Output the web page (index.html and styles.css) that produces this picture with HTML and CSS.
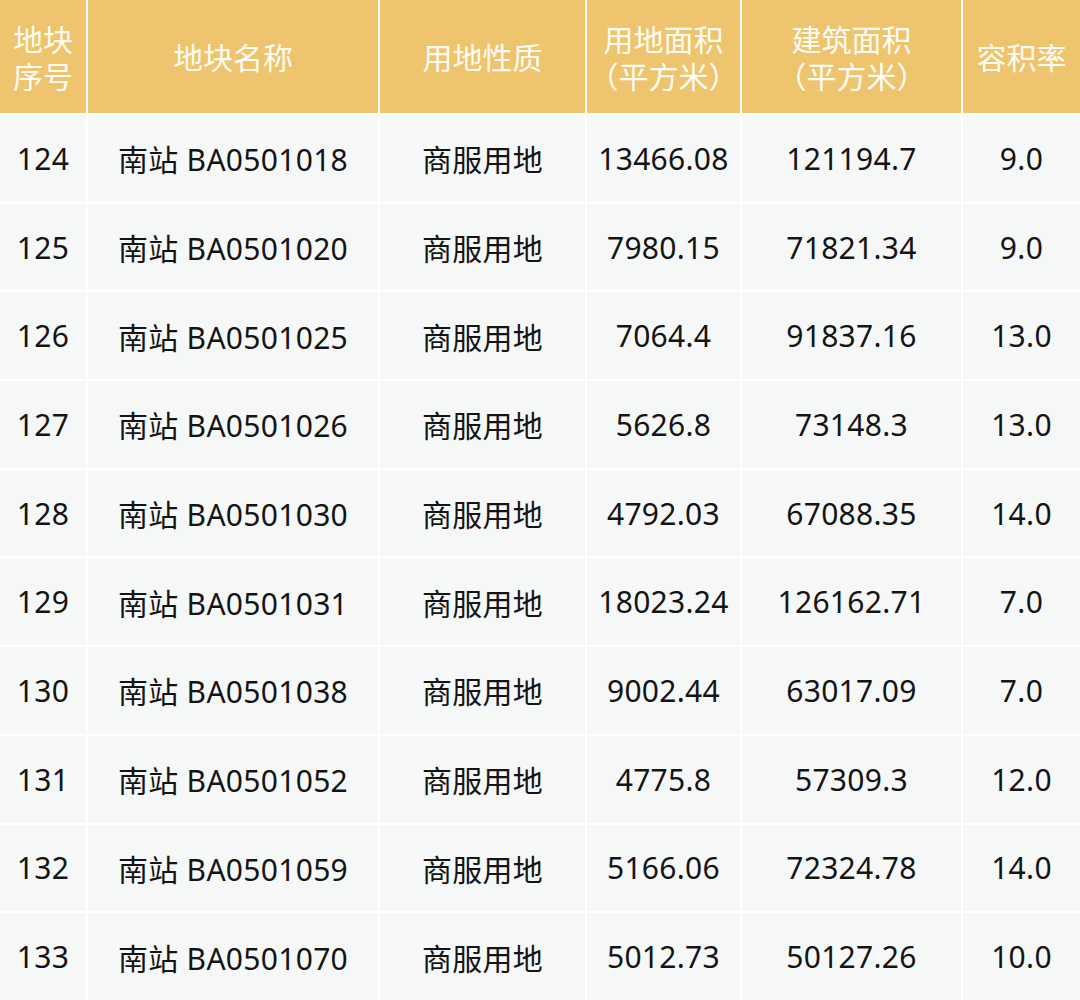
FILE: index.html
```html
<!DOCTYPE html>
<html lang="zh">
<head>
<meta charset="utf-8">
<link rel="stylesheet" href="styles.css">
</head>
<body>
<div class="table">
  <div class="th">地块<br>序号</div>
  <div class="th">地块名称</div>
  <div class="th">用地性质</div>
  <div class="th">用地面积<br>（平方米）</div>
  <div class="th">建筑面积<br>（平方米）</div>
  <div class="th">容积率</div>

  <div class="td">124</div><div class="td">南站 BA0501018</div><div class="td">商服用地</div><div class="td">13466.08</div><div class="td">121194.7</div><div class="td">9.0</div>
  <div class="td">125</div><div class="td">南站 BA0501020</div><div class="td">商服用地</div><div class="td">7980.15</div><div class="td">71821.34</div><div class="td">9.0</div>
  <div class="td">126</div><div class="td">南站 BA0501025</div><div class="td">商服用地</div><div class="td">7064.4</div><div class="td">91837.16</div><div class="td">13.0</div>
  <div class="td">127</div><div class="td">南站 BA0501026</div><div class="td">商服用地</div><div class="td">5626.8</div><div class="td">73148.3</div><div class="td">13.0</div>
  <div class="td">128</div><div class="td">南站 BA0501030</div><div class="td">商服用地</div><div class="td">4792.03</div><div class="td">67088.35</div><div class="td">14.0</div>
  <div class="td">129</div><div class="td">南站 BA0501031</div><div class="td">商服用地</div><div class="td">18023.24</div><div class="td">126162.71</div><div class="td">7.0</div>
  <div class="td">130</div><div class="td">南站 BA0501038</div><div class="td">商服用地</div><div class="td">9002.44</div><div class="td">63017.09</div><div class="td">7.0</div>
  <div class="td">131</div><div class="td">南站 BA0501052</div><div class="td">商服用地</div><div class="td">4775.8</div><div class="td">57309.3</div><div class="td">12.0</div>
  <div class="td">132</div><div class="td">南站 BA0501059</div><div class="td">商服用地</div><div class="td">5166.06</div><div class="td">72324.78</div><div class="td">14.0</div>
  <div class="td">133</div><div class="td">南站 BA0501070</div><div class="td">商服用地</div><div class="td">5012.73</div><div class="td">50127.26</div><div class="td">10.0</div>
</div>
</body>
</html>
```
FILE: styles.css
```css
html, body {
  margin: 0;
  padding: 0;
  background: #ffffff;
}
.table {
  display: grid;
  grid-template-columns: 86px 290px 205px 153px 219px 117px;
  grid-template-rows: 113px;
  grid-auto-rows: 86.7px;
  column-gap: 2px;
  row-gap: 2px;
  width: 1080px;
  height: 1000px;
  overflow: hidden;
  background: #ffffff;
  font-family: "Noto Sans", "Noto Sans CJK SC", sans-serif;
  font-size: 30px;
}
.th {
  background: #efc46e;
  color: #fffdf3;
  display: flex;
  align-items: center;
  justify-content: center;
  text-align: center;
  line-height: 37px;
  font-size: 30px;
  font-family: "Noto Sans CJK SC", sans-serif;
}
.td {
  background: #f6f7f7;
  color: #141414;
  display: flex;
  align-items: center;
  justify-content: center;
  text-align: center;
  letter-spacing: 0.3px;
}
```
